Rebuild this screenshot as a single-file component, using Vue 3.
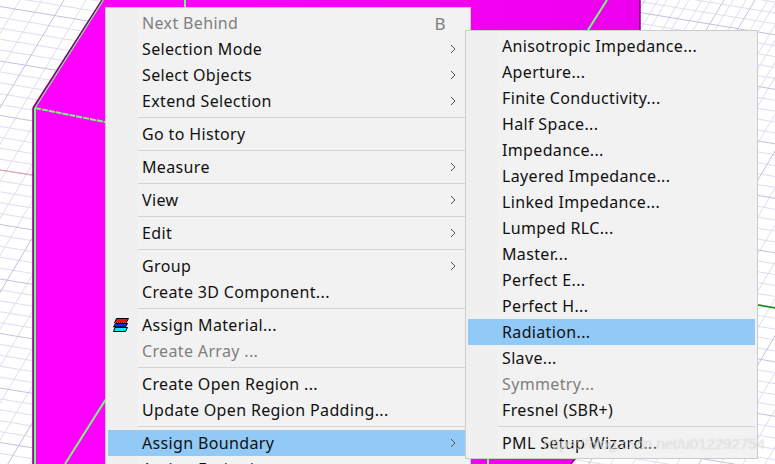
<script setup>
const mainGroups = [
  [
    { label: 'Next Behind', disabled: true, key: 'B' },
    { label: 'Selection Mode', arrow: true },
    { label: 'Select Objects', arrow: true },
    { label: 'Extend Selection', arrow: true }
  ],
  [{ label: 'Go to History' }],
  [{ label: 'Measure', arrow: true }],
  [{ label: 'View', arrow: true }],
  [{ label: 'Edit', arrow: true }],
  [{ label: 'Group', arrow: true }, { label: 'Create 3D Component...' }],
  [{ label: 'Assign Material...', icon: true }, { label: 'Create Array ...', disabled: true }],
  [{ label: 'Create Open Region ...' }, { label: 'Update Open Region Padding...' }],
  [{ label: 'Assign Boundary', arrow: true, active: true }, { label: 'Assign Excitation', arrow: true }]
]
const subGroups = [
  [
    { label: 'Anisotropic Impedance...' },
    { label: 'Aperture...' },
    { label: 'Finite Conductivity...' },
    { label: 'Half Space...' },
    { label: 'Impedance...' },
    { label: 'Layered Impedance...' },
    { label: 'Linked Impedance...' },
    { label: 'Lumped RLC...' },
    { label: 'Master...' },
    { label: 'Perfect E...' },
    { label: 'Perfect H...' },
    { label: 'Radiation...', active: true },
    { label: 'Slave...' },
    { label: 'Symmetry...', disabled: true },
    { label: 'Fresnel (SBR+)' }
  ],
  [{ label: 'PML Setup Wizard...' }]
]

// Perspective floor grid: every fifth line is a major one.
const SLOPE_H = 0.165
const SLOPE_D = 1.68
function buildGrid(xFrom, xTo, yAtZero, xAtTop) {
  const minor = []
  const major = []
  for (let k = -60; k < 60; k++) {
    const y = yAtZero + k * 10.9
    const line = `M${xFrom} ${(y + xFrom * SLOPE_H).toFixed(1)}L${xTo} ${(y + xTo * SLOPE_H).toFixed(1)}`
    ;(((k % 5) + 5) % 5 === 0 ? major : minor).push(line)
  }
  for (let k = -30; k < 30; k++) {
    const x = xAtTop + k * 22
    const line = `M${x} 0L${(x - 464 / SLOPE_D).toFixed(1)} 464`
    ;(((k % 5) + 5) % 5 === 0 ? major : minor).push(line)
  }
  return { minor: minor.join(''), major: major.join('') }
}
const leftGrid = buildGrid(0, 110, 170, 174)
const rightGrid = buildGrid(550, 775, 179.4, 975)
</script>

<template>
  <div class="stage">
    <svg class="scene" width="775" height="464" viewBox="0 0 775 464">
      <defs>
        <linearGradient id="face" gradientUnits="userSpaceOnUse" x1="200" y1="0" x2="560" y2="0">
          <stop offset="0" stop-color="#ff00ff" />
          <stop offset="1" stop-color="#ee00ee" />
        </linearGradient>
      </defs>
      <path :d="leftGrid.minor" class="grid-minor" />
      <path :d="leftGrid.major" class="grid-major" />
      <path :d="rightGrid.minor" class="grid-minor" />
      <path :d="rightGrid.major" class="grid-major" />
      <path d="M0 170L33 175" class="axis" />
      <polygon points="102,0 640,0 640,400 571,464 33,464 33,108" fill="url(#face)" />
      <path d="M33 108L102 0M33 108V464M640 0V400" class="edge-dark" />
      <path d="M758 305L775 308" class="axis-green" />
      <path d="M571 464L574 460" class="edge-dark" />
      <path d="M35 108L105 122" class="edge-green dashed" />
      <path d="M35 108L103.500 0" class="edge-green thin" />
      <path d="M35 108V464M106 399L65 464M185 0V8M488 458V464" class="edge-green" />
      <path d="M607 0L588 30" class="edge-green" />
    </svg>
    <div class="menu main-menu">
      <template v-for="(group, g) in mainGroups" :key="g">
        <div v-if="g" class="sep"></div>
        <div
          v-for="item in group"
          :key="item.label"
          class="item"
          :class="{ disabled: item.disabled, active: item.active }"
        >
          <span class="gutter">
            <svg v-if="item.icon" width="16" height="14" viewBox="0 0 16 14">
              <path d="M3.500 .5H15.500L13 5H1.500Z" fill="#f01010" stroke="#000" />
              <path d="M2 5H13" stroke="#ffe000" stroke-dasharray="1 1" />
              <path d="M2.500 5.500H14.500L12.500 9H.5Z" fill="#1030f0" stroke="#000" />
              <path d="M2 9.500H14.500L12.500 13.500H.5Z" fill="#10e8f0" stroke="#000" />
            </svg>
          </span>
          <span class="label">{{ item.label }}</span>
          <span v-if="item.key" class="key">{{ item.key }}</span>
          <svg v-if="item.arrow" class="arrow" width="6" height="10" viewBox="0 0 6 10">
            <path d="M1 1L5 5L1 9" fill="none" stroke="#555" stroke-width="1" />
          </svg>
        </div>
      </template>
    </div>
    <div class="menu sub-menu">
      <template v-for="(group, g) in subGroups" :key="g">
        <div v-if="g" class="sep"></div>
        <div
          v-for="item in group"
          :key="item.label"
          class="item"
          :class="{ disabled: item.disabled, active: item.active }"
        >
          <span class="gutter"></span>
          <span class="label">{{ item.label }}</span>
        </div>
      </template>
    </div>
    <div class="watermark">https://blog.csdn.net/u012292754</div>
  </div>
</template>

<style scoped>
.stage {
  position: relative;
  width: 775px;
  height: 464px;
  overflow: hidden;
  background: #ffffff;
  font-family: "Noto Sans", "Open Sans", sans-serif;
  font-size: 16px;
  letter-spacing: 0.35px;
  color: #111111;
}
.scene {
  position: absolute;
  left: 0;
  top: 0;
}
.grid-minor {
  fill: none;
  stroke: #dfddef;
  stroke-width: 1;
}
.grid-major {
  fill: none;
  stroke: #c4c0de;
  stroke-width: 1;
}
.axis {
  fill: none;
  stroke: #e6a0a0;
  stroke-width: 1;
}
.axis-green {
  fill: none;
  stroke: #0a8a0a;
  stroke-width: 1.5;
}
.edge-dark {
  fill: none;
  stroke: #800080;
  stroke-width: 1.500;
}
.edge-green {
  fill: none;
  stroke: #70ff70;
  stroke-width: 2;
}
.edge-green.thin {
  stroke-width: 1.2;
}
.edge-green.dashed {
  stroke-dasharray: 6 1;
}
.menu {
  position: absolute;
  box-sizing: border-box;
  background: linear-gradient(to right, #f0f0f0 32px, #f2f2f2 32px);
  border: 1px solid #cccccc;
  padding: 2px;
}
.main-menu {
  left: 105px;
  top: 7px;
  width: 366px;
  height: 480px;
}
.sub-menu {
  left: 465px;
  top: 30px;
  width: 293px;
}
.item {
  display: flex;
  align-items: center;
  height: 26px;
  white-space: nowrap;
}
.item.disabled {
  color: #7f7f7f;
}
.item.active {
  background: #91c9f7;
}
.gutter {
  flex: none;
  display: flex;
  align-items: center;
  box-sizing: border-box;
  width: 34px;
  padding-left: 5px;
}
.label {
  flex: 1;
}
.key {
  margin-right: 22px;
  font-size: 17px;
}
.arrow {
  margin-right: 12px;
}
.sep {
  height: 1px;
  margin: 3px 0 3px 30px;
  background: #d4d4d4;
}
.watermark {
  position: absolute;
  right: 10px;
  top: 435px;
  font-family: "Liberation Sans", sans-serif;
  font-size: 15px;
  letter-spacing: 0;
  color: rgba(255, 255, 255, 0.6);
  text-shadow: 0 0 1px rgba(110, 110, 110, 0.4);
}
</style>
